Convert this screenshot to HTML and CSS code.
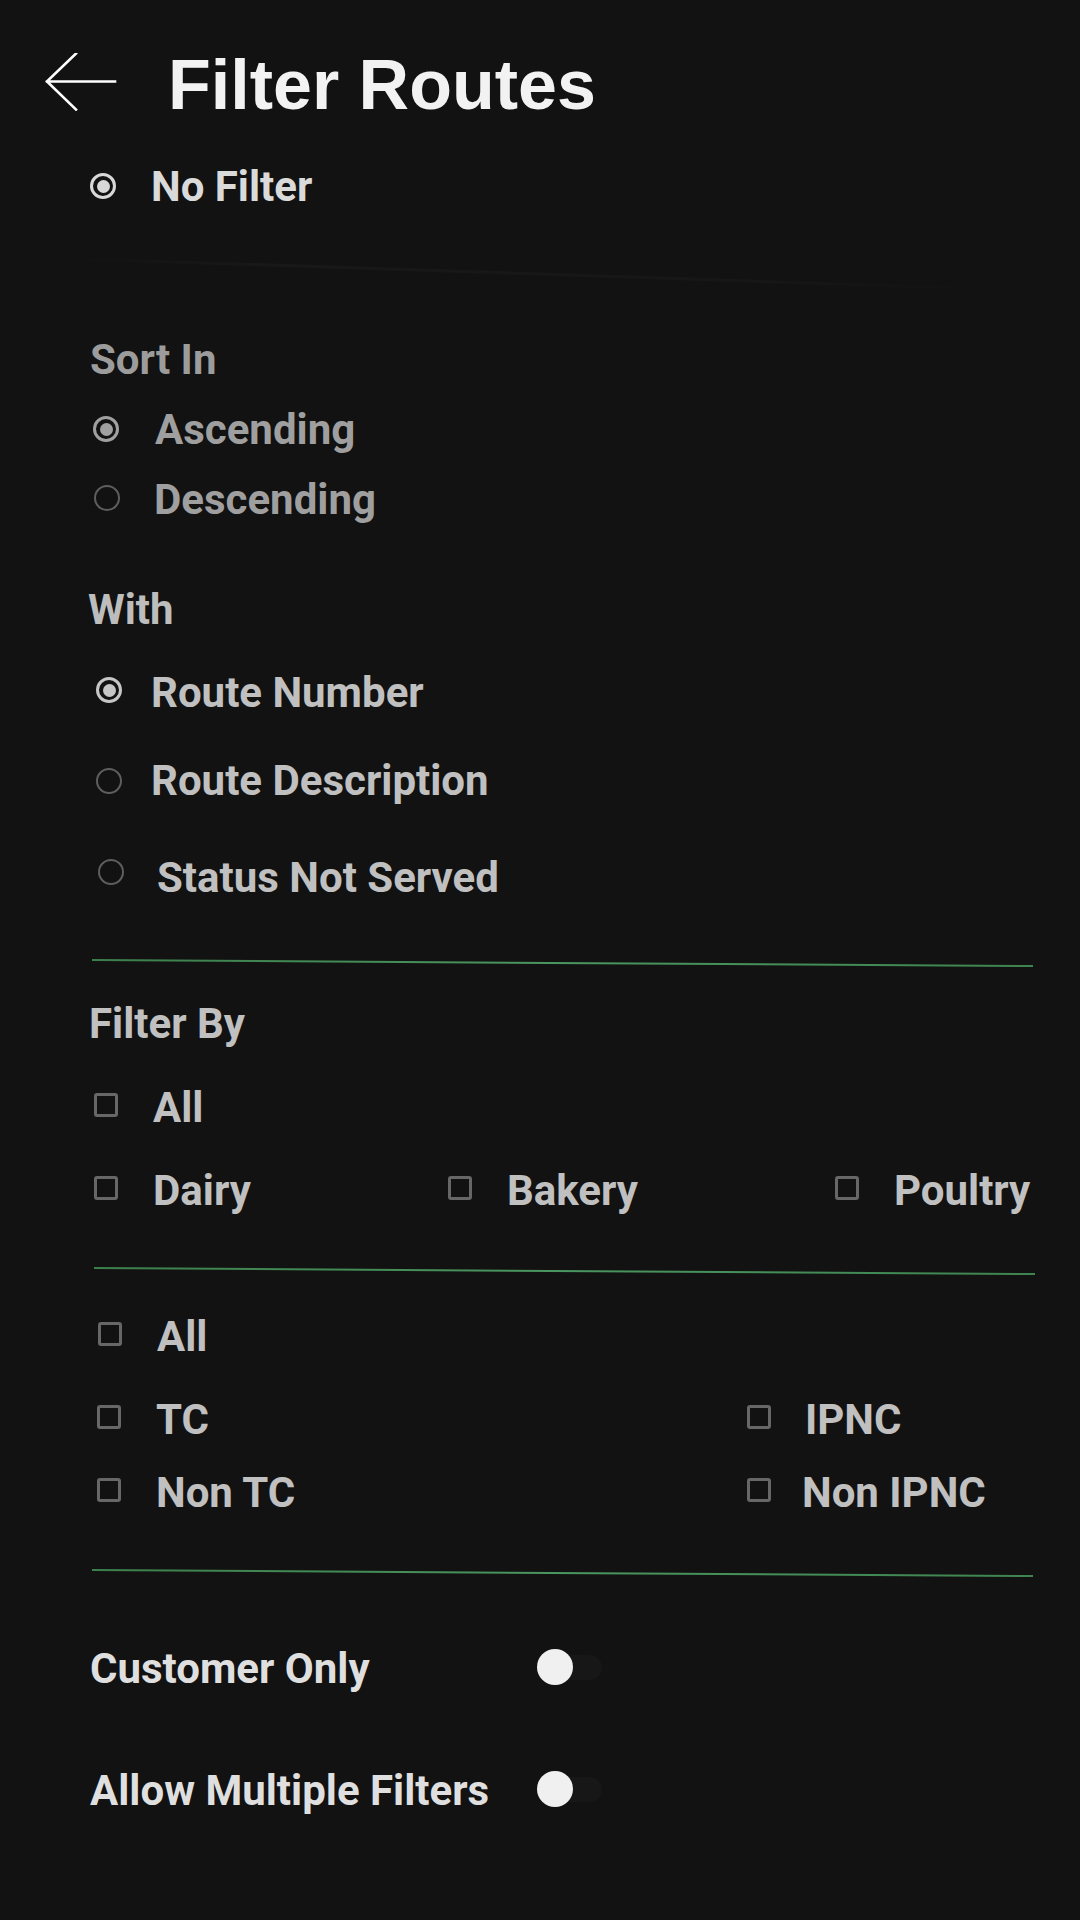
FILE: index.html
```html
<!DOCTYPE html>
<html lang="en">
<head>
<meta charset="utf-8">
<title>Filter Routes</title>
<link rel="stylesheet" href="styles.css">
</head>
<body>
  <header class="header">
    <svg class="back" width="72" height="58" viewBox="0 0 72 58" aria-hidden="true">
      <path d="M70 28.5 H2 M2 28.5 L31 0.5 M2 28.5 L31 56.5" fill="none" stroke="#ffffff" stroke-width="2.6" stroke-linecap="square"/>
    </svg>
    <h1 class="title">Filter Routes</h1>
  </header>

  <div class="row row-nofilter">
    <span class="radio radio-light checked"></span>
    <span class="label label-light">No Filter</span>
  </div>

  <div class="shadow-line"></div>

  <div class="heading heading-sort">Sort In</div>
  <div class="row row-asc">
    <span class="radio radio-dim checked"></span>
    <span class="label label-dim">Ascending</span>
  </div>
  <div class="row row-desc">
    <span class="radio radio-off"></span>
    <span class="label label-dim">Descending</span>
  </div>

  <div class="heading heading-with">With</div>
  <div class="row row-num">
    <span class="radio radio-mid checked"></span>
    <span class="label label-mid">Route Number</span>
  </div>
  <div class="row row-descr">
    <span class="radio radio-off"></span>
    <span class="label label-mid">Route Description</span>
  </div>
  <div class="row row-status">
    <span class="radio radio-off"></span>
    <span class="label label-mid">Status Not Served</span>
  </div>

  <div class="green-line line-1"></div>

  <div class="heading heading-filter">Filter By</div>
  <div class="row row-all1">
    <span class="check"></span>
    <span class="label label-mid label-check">All</span>
  </div>
  <div class="grid-row grid-three">
    <div class="cell"><span class="check"></span><span class="label label-mid label-check">Dairy</span></div>
    <div class="cell"><span class="check"></span><span class="label label-mid label-check">Bakery</span></div>
    <div class="cell"><span class="check"></span><span class="label label-mid label-check">Poultry</span></div>
  </div>

  <div class="green-line line-2"></div>

  <div class="row row-all2">
    <span class="check"></span>
    <span class="label label-mid label-check">All</span>
  </div>
  <div class="grid-row grid-two row-tc">
    <div class="cell"><span class="check"></span><span class="label label-mid label-check">TC</span></div>
    <div class="cell"><span class="check"></span><span class="label label-mid label-ipnc">IPNC</span></div>
  </div>
  <div class="grid-row grid-two row-nontc">
    <div class="cell"><span class="check"></span><span class="label label-mid label-check">Non TC</span></div>
    <div class="cell"><span class="check"></span><span class="label label-mid label-nonipnc">Non IPNC</span></div>
  </div>

  <div class="green-line line-3"></div>

  <div class="toggle-row toggle-customer">
    <span class="toggle-label">Customer Only</span>
    <span class="toggle"><span class="track"></span><span class="thumb"></span></span>
  </div>
  <div class="toggle-row toggle-multi">
    <span class="toggle-label">Allow Multiple Filters</span>
    <span class="toggle"><span class="track"></span><span class="thumb"></span></span>
  </div>
</body>
</html>
```

FILE: styles.css
```css
html, body {
  margin: 0;
  padding: 0;
  background: #121212;
}

body {
  width: 1080px;
  min-height: 1920px;
  font-family: Roboto, "Noto Sans", "Liberation Sans", sans-serif;
  font-weight: 700;
  overflow: hidden;
}

/* ---------- header ---------- */
.header {
  display: flex;
  align-items: flex-start;
  padding-top: 45px;
  height: 80px;
}

.back {
  display: block;
  margin-left: 45px;
  margin-top: 8px;
  flex: none;
}

.title {
  margin: 0 0 0 51px;
  font-family: "Liberation Sans", Arial, sans-serif;
  font-weight: 700;
  font-size: 70px;
  line-height: 80px;
  color: #f2f2f2;
}

/* ---------- generic rows ---------- */
.row {
  display: flex;
  align-items: flex-start;
  height: 50px;
}

.label {
  font-size: 42px;
  line-height: 50px;
  white-space: nowrap;
}

.label-light { color: #dadada; }
.label-dim { color: #9f9f9f; }
.label-mid { color: #c0c0c0; }

.heading {
  font-size: 42px;
  line-height: 50px;
  height: 50px;
  white-space: nowrap;
}

.heading-sort { margin-top: 75px; margin-left: 90px; color: #9c9c9c; }
.heading-with { margin-top: 60px; margin-left: 88px; color: #bdbdbd; }
.heading-filter { margin-top: 38px; margin-left: 89px; color: #c0c0c0; }

/* ---------- radios ---------- */
.radio {
  flex: none;
  box-sizing: border-box;
  width: 26px;
  height: 26px;
  border-radius: 50%;
  border: 2.5px solid #5c5c5c;
  display: flex;
  align-items: center;
  justify-content: center;
}

.radio.checked::after {
  content: "";
  width: 13px;
  height: 13px;
  border-radius: 50%;
  background: currentColor;
}

.radio-light { border-color: #d8d8d8; color: #d8d8d8; border-width: 3px; }
.radio-dim { border-color: #a0a0a0; color: #a0a0a0; border-width: 3px; }
.radio-mid { border-color: #c6c6c6; color: #c6c6c6; border-width: 3px; }
.radio-off { border-color: #5e5e5e; }

.row-nofilter { margin-top: 37px; }
.row-nofilter .radio { margin-left: 90px; margin-top: 11px; }
.row-nofilter .label { margin-left: 35px; }

.row-asc { margin-top: 20px; }
.row-asc .radio { margin-left: 93px; margin-top: 11px; }
.row-asc .label { margin-left: 36px; }

.row-desc { margin-top: 20px; }
.row-desc .radio { margin-left: 94px; margin-top: 10px; }
.row-desc .label { margin-left: 34px; }

.row-num { margin-top: 33px; }
.row-num .radio { margin-left: 96px; margin-top: 9px; }
.row-num .label { margin-left: 29px; }

.row-descr { margin-top: 38px; }
.row-descr .radio { margin-left: 96px; margin-top: 12px; }
.row-descr .label { margin-left: 29px; }

.row-status { margin-top: 47px; }
.row-status .radio { margin-left: 98px; margin-top: 6px; }
.row-status .label { margin-left: 33px; }

/* ---------- faint divider under "No Filter" ---------- */
.shadow-line {
  margin-top: 45px;
  margin-left: 70px;
  width: 940px;
  height: 3px;
  background: linear-gradient(90deg, rgba(24,24,24,0), #181818 20%, #171717 70%, rgba(24,24,24,0));
  transform: rotate(1.9deg);
  transform-origin: left center;
}

/* ---------- green dividers ---------- */
.green-line {
  width: 941px;
  height: 2px;
  background: linear-gradient(90deg, #3b7f4c, #4a9660 50%, #3e8450);
  transform: rotate(0.37deg);
  transform-origin: left center;
}

.line-1 { margin-top: 56px; margin-left: 92px; }
.line-2 { margin-top: 51px; margin-left: 94px; }
.line-3 { margin-top: 51px; margin-left: 92px; }

/* ---------- checkboxes ---------- */
.check {
  flex: none;
  box-sizing: border-box;
  width: 24px;
  height: 24px;
  border: 3px solid #676767;
  border-radius: 3px;
  margin-top: 10px;
}

.label-check { margin-left: 35px; }
.label-ipnc { margin-left: 34px; }
.label-nonipnc { margin-left: 31px; }

.row-all1 { margin-top: 34px; }
.row-all1 .check { margin-left: 94px; }

.row-all2 { margin-top: 43px; }
.row-all2 .check { margin-left: 98px; }

.grid-row {
  display: grid;
  height: 50px;
}

.cell {
  display: flex;
  align-items: flex-start;
  height: 50px;
}

.grid-three {
  margin-top: 33px;
  margin-left: 94px;
  grid-template-columns: 354px 387px auto;
}

.grid-two {
  margin-left: 97px;
  grid-template-columns: 650px auto;
}

.row-tc { margin-top: 33px; }
.row-nontc { margin-top: 23px; }

/* ---------- toggles ---------- */
.toggle-row {
  display: grid;
  grid-template-columns: 447px auto;
  align-items: start;
  height: 50px;
  margin-left: 90px;
}

.toggle-customer { margin-top: 73px; }
.toggle-multi { margin-top: 72px; }

.toggle-label {
  font-size: 42px;
  line-height: 50px;
  color: #dfdfdf;
  white-space: nowrap;
}

.toggle {
  position: relative;
  display: block;
  width: 65px;
  height: 36px;
  margin-top: 5px;
}

.track {
  position: absolute;
  left: 2px;
  top: 6px;
  width: 63px;
  height: 25px;
  border-radius: 13px;
  background: #171717;
}

.thumb {
  position: absolute;
  left: 0;
  top: 0;
  width: 36px;
  height: 36px;
  border-radius: 50%;
  background: #f0f0f0;
}
```
